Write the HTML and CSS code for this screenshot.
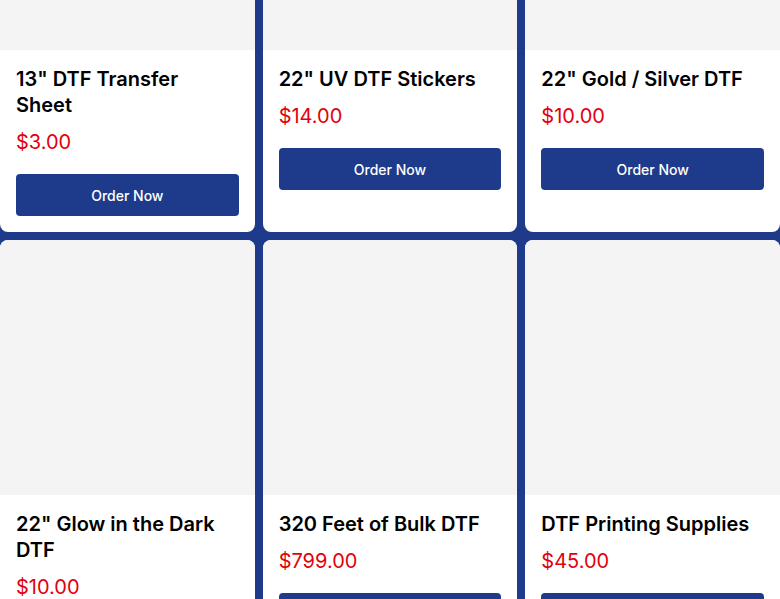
FILE: index.html
```html
<!DOCTYPE html>
<html lang="en">
<head>
<meta charset="utf-8">
<title>Products</title>
<link rel="stylesheet" href="styles.css">
</head>
<body>
<div class="grid">
  <div class="card">
    <div class="thumb"></div>
    <div class="body">
      <h3 class="title">13" DTF Transfer Sheet</h3>
      <div class="price">$3.00</div>
      <button class="btn">Order Now</button>
    </div>
  </div>
  <div class="card">
    <div class="thumb"></div>
    <div class="body">
      <h3 class="title">22" UV DTF Stickers</h3>
      <div class="price">$14.00</div>
      <button class="btn">Order Now</button>
    </div>
  </div>
  <div class="card">
    <div class="thumb"></div>
    <div class="body">
      <h3 class="title">22" Gold / Silver DTF</h3>
      <div class="price">$10.00</div>
      <button class="btn">Order Now</button>
    </div>
  </div>
  <div class="card">
    <div class="thumb"></div>
    <div class="body">
      <h3 class="title">22" Glow in the Dark DTF</h3>
      <div class="price">$10.00</div>
      <button class="btn">Order Now</button>
    </div>
  </div>
  <div class="card">
    <div class="thumb"></div>
    <div class="body">
      <h3 class="title">320 Feet of Bulk DTF</h3>
      <div class="price">$799.00</div>
      <button class="btn">Order Now</button>
    </div>
  </div>
  <div class="card">
    <div class="thumb"></div>
    <div class="body">
      <h3 class="title">DTF Printing Supplies</h3>
      <div class="price">$45.00</div>
      <button class="btn">Order Now</button>
    </div>
  </div>
</div>
</body>
</html>
```
FILE: styles.css
```css
* { box-sizing: border-box; }
html, body {
  margin: 0;
  padding: 0;
  background: #1e3a8a;
  font-family: Inter, "Noto Sans", sans-serif;
}
.grid {
  display: grid;
  grid-template-columns: repeat(3, 1fr);
  gap: 8px;
  margin-top: -204.5px;
}
.card {
  background: #ffffff;
  border-radius: 8px;
  overflow: hidden;
}
.thumb {
  aspect-ratio: 1 / 1;
  background: #f4f4f5;
}
.body {
  padding: 16px;
}
.title {
  margin: 0 0 8px;
  font-size: 20px;
  line-height: 26px;
  font-weight: 600;
  color: #000;
}
.price {
  font-size: 20px;
  line-height: 32px;
  color: #e3000b;
  margin-bottom: 16px;
}
.btn {
  display: block;
  width: 100%;
  height: 42px;
  border: none;
  border-radius: 4px;
  background: #1e3a8a;
  color: #fff;
  font-family: Inter, "Noto Sans", sans-serif;
  font-size: 14px;
  font-weight: 500;
  cursor: pointer;
}
```
